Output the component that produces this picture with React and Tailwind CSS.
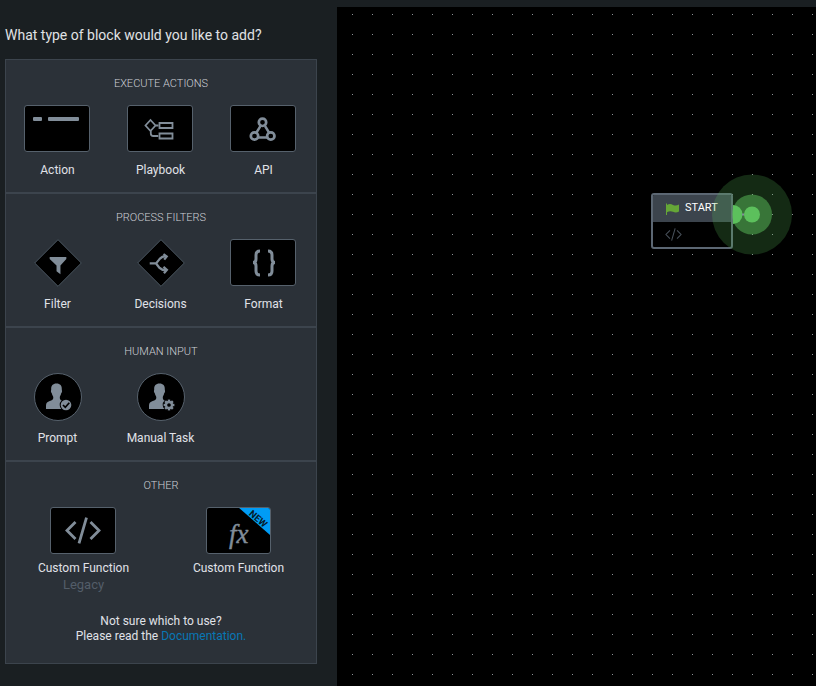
import React from "react";

const GREY = "#818d99";

function Section({ title, children, className = "" }) {
  return (
    <section className={`w-[312px] border border-[#3c444d] bg-[#2b3138] ${className}`}>
      <h2 className="pt-4 text-center text-[11px] font-light leading-4 text-[#cdd0d6]">{title}</h2>
      {children}
    </section>
  );
}

function Row({ children }) {
  return <div className="mt-[13px] flex">{children}</div>;
}

function Block({ label, children }) {
  return (
    <div className="flex w-[103px] flex-col items-center">
      <div className="flex h-12 items-start justify-center">{children}</div>
      <div className="mt-[9px] text-[12px] leading-4 text-[#e0e2e8]">{label}</div>
    </div>
  );
}

function Tile({ children, className = "mr-px w-[66px]" }) {
  return (
    <div className={`relative h-[47px] overflow-hidden rounded-[3px] border border-[#56616c] bg-black ${className}`}>
      {children}
    </div>
  );
}

function PlaybookIcon() {
  return (
    <svg width="65" height="46" fill="none" stroke={GREY} strokeWidth="1.8">
      <path d="M22.500 14l5 5.500-5 5.500-5-5.500zM27.500 19.500h3M22.800 25v2.500q0 2.500 2.500 2.500h5" />
      <path d="M31.500 17h13v5h-13zM31.500 27.500h13v5h-13z" />
    </svg>
  );
}

function ApiIcon() {
  return (
    <svg width="65" height="46" fill="none" stroke={GREY}>
      <path strokeWidth="2.400" d="M29.500 20l-4 6.500M34 20l4 6.500M27 31.500h9.500" />
      <g strokeWidth="2.700">
        <circle cx="31.500" cy="16.300" r="3.700" />
        <circle cx="23.500" cy="30" r="3.700" />
        <circle cx="39.800" cy="30" r="3.700" />
      </g>
    </svg>
  );
}

function Diamond({ children }) {
  return (
    <svg className="ml-px" width="48" height="48" viewBox="0 0 49 49">
      <path d="M24.500 .7L48.300 24.500 24.500 48.300 .7 24.500z" fill="#000" stroke="#4d5863" />
      {children}
    </svg>
  );
}

function Person({ children }) {
  return (
    <svg width="48" height="48" viewBox="0 0 48 48">
      <circle cx="24" cy="24" r="23.500" fill="#000" stroke="#56616c" />
      <path
        fill={GREY}
        d="M22.500 10.500c3.700 0 5.500 2.300 5.300 5.700 0 1 .4 1.500.2 2.600-.2 1-.8 1.200-1 2.200-.3 1.600-1.200 2-1.200 3.500 0 2.600 1.200 2.800 4 3.600 2.200.8 3.700 1.800 3.700 4.400v3.500H12v-3.500c0-2.600 1.500-3.600 3.700-4.400 2.400-.9 3.600-1.200 3.600-3.600 0-1.500-1-1.900-1.300-3.500-.2-1-.8-1.200-1-2.200-.2-1.100.2-1.600.2-2.600-.2-3.400 1.600-5.700 5.300-5.700z"
      />
      {children}
    </svg>
  );
}

function CodeGlyph({ width, height, color, stroke }) {
  return (
    <svg width={width} height={height} viewBox="0 0 36 27" fill="none" stroke={color} strokeWidth={stroke}>
      <path d="M10.500 5L2 13.500 10.500 22M25.500 5l8.500 8.500-8.500 8.500M21.500 .7L14 26.300" />
    </svg>
  );
}

const teeth = [0, 45, 90, 135, 180, 225, 270, 315];

function Sidebar() {
  return (
    <aside className="w-[337px] shrink-0 pl-[5px] pt-[25px]">
      <h1 className="text-[14px] leading-5 text-[#e0e2e5]">What type of block would you like to add?</h1>
      <div className="mt-[14px]">
        <Section title="EXECUTE ACTIONS" className="h-[134px]">
          <Row>
            <Block label="Action">
              <Tile>
                <div className="flex gap-1.5 pl-2 pt-[11px]">
                  <i className="h-1 w-[9px] rounded-[1px] bg-[#818d99]" />
                  <i className="h-1 w-[31px] rounded-[1px] bg-[#818d99]" />
                </div>
              </Tile>
            </Block>
            <Block label="Playbook"><Tile><PlaybookIcon /></Tile></Block>
            <Block label="API"><Tile><ApiIcon /></Tile></Block>
          </Row>
        </Section>

        <Section title="PROCESS FILTERS" className="h-[134px]">
          <Row>
            <Block label="Filter">
              <Diamond><path fill={GREY} d="M16 18.500h17v2l-6 6.500v9l-4-3v-6l-7-6.500z" /></Diamond>
            </Block>
            <Block label="Decisions">
              <Diamond>
                <path fill="none" stroke={GREY} strokeWidth="2.300" d="M13 25h6.500l3.500-4.500q2.500-3 6.500-3M19.500 25l3.500 4.500q2.500 2.500 6.500 2.500" />
                <path fill="none" stroke={GREY} strokeWidth="2.300" d="M27 15.500l3.300 2.300-2.500 3.200M27 28.500l3.500 3-3 3.500" />
              </Diamond>
            </Block>
            <Block label="Format">
              <Tile>
                <svg width="65" height="46" fill="none" stroke={GREY} strokeWidth="3">
                  <path d="M29 11q-4 0-4 4v4q0 3.500-3 3.500 3 0 3 3.500v5q0 4 4 4M37 11q4 0 4 4v4q0 3.500 3 3.500-3 0-3 3.500v5q0 4-4 4" />
                </svg>
              </Tile>
            </Block>
          </Row>
        </Section>

        <Section title="HUMAN INPUT" className="h-[134px]">
          <Row>
            <Block label="Prompt">
              <Person>
                <circle cx="32" cy="32" r="6.300" fill="#000" />
                <circle cx="32" cy="32" r="5.300" fill={GREY} />
                <path d="M29 32l2.300 2.300 4-4.600" fill="none" stroke="#000" strokeWidth="1.700" />
              </Person>
            </Block>
            <Block label="Manual Task">
              <Person>
                <circle cx="32" cy="32" r="6.300" fill="#000" />
                {teeth.map((a) => (
                  <rect key={a} x="30.800" y="26.600" width="2.400" height="3" fill={GREY} transform={`rotate(${a} 32 32)`} />
                ))}
                <circle cx="32" cy="32" r="3" fill="none" stroke={GREY} strokeWidth="2.300" />
              </Person>
            </Block>
          </Row>
        </Section>

        <Section title="OTHER" className="h-[203px]">
          <div className="mt-[13px] flex">
            <div className="flex w-[155px] flex-col items-center">
              <Tile>
                <div className="flex h-full items-center justify-center">
                  <CodeGlyph width={36} height={27} color={GREY} stroke={2.8} />
                </div>
              </Tile>
              <div className="mt-[6px] text-[12px] leading-4 text-[#e0e2e8]">Custom Function</div>
              <div className="text-[13px] leading-[18px] text-[#535d69]">Legacy</div>
            </div>
            <div className="flex w-[155px] flex-col items-center">
              <Tile className="w-[65px]">
                <svg width="64" height="46" className="block">
                  <text x="22" y="34.500" fontSize="27" fontStyle="italic" fontFamily="Liberation Serif, serif" fill={GREY} stroke={GREY} strokeWidth=".4">fx</text>
                  <path d="M31-1h33v29z" fill="#009cf5" />
                  <text x="51" y="14" textAnchor="middle" fontSize="9.500" fontWeight="700" fontFamily="Roboto, sans-serif" fill="#061a28" transform="rotate(41 51 11)">NEW</text>
                </svg>
              </Tile>
              <div className="mt-[6px] text-[12px] leading-4 text-[#e0e2e8]">Custom Function</div>
            </div>
          </div>
          <p className="mt-[20px] text-center text-[12px] leading-[15px] text-[#e0e2e8]">
            Not sure which to use?<br />
            Please read the <a className="text-[#0877b5]">Documentation.</a>
          </p>
        </Section>
      </div>
    </aside>
  );
}

function Canvas() {
  return (
    <main className="relative mt-[7px] flex-1 overflow-hidden bg-black">
      <svg className="absolute inset-0" width="479" height="679" shapeRendering="crispEdges">
        <defs>
          <pattern id="dots" x="15" y="7" width="20" height="20" patternUnits="userSpaceOnUse">
            <rect width="1" height="1" fill="#8f9498" />
          </pattern>
        </defs>
        <rect width="479" height="679" fill="url(#dots)" />
      </svg>
      <div className="absolute left-[314px] top-[186px] h-14 w-[82px] overflow-hidden rounded-[3px] border-2 border-[#5c6773] bg-black">
        <div className="flex h-[27px] items-center bg-[#3c444d] pl-[13px]">
          <svg width="13" height="12" viewBox="0 0 13 12" fill="#65a637">
            <path d="M0 .5h1v11.500H0zM1 2q3-2 6 0 3 1.300 6-.5v7q-3 1.800-6 .3-3-1.500-6 .4z" />
          </svg>
          <span className="mb-0.5 ml-[6px] text-[11px] leading-4 text-white">START</span>
        </div>
        <div className="pl-3 pt-[6px]">
          <CodeGlyph width={17} height={13} color="#49525c" stroke={2.2} />
        </div>
      </div>
      <svg className="absolute left-[375px] top-[167px]" width="80" height="81">
        <circle cx="40" cy="40.500" r="40" fill="#5cc05c" fillOpacity=".22" />
        <circle cx="40" cy="40.500" r="20" fill="#5cc05c" fillOpacity=".5" />
        <path d="M21 31a9.500 9.500 0 0 1 0 19z" fill="#5cc05c" />
        <path d="M30 40.500h4" stroke="#818d99" strokeWidth="2" />
        <circle cx="40" cy="40.500" r="8" fill="#5cc05c" />
      </svg>
    </main>
  );
}

export default function App() {
  return (
    <div className="flex h-[686px] w-[816px] overflow-hidden bg-[#1a1f22] font-[Roboto,sans-serif]">
      <Sidebar />
      <Canvas />
    </div>
  );
}
